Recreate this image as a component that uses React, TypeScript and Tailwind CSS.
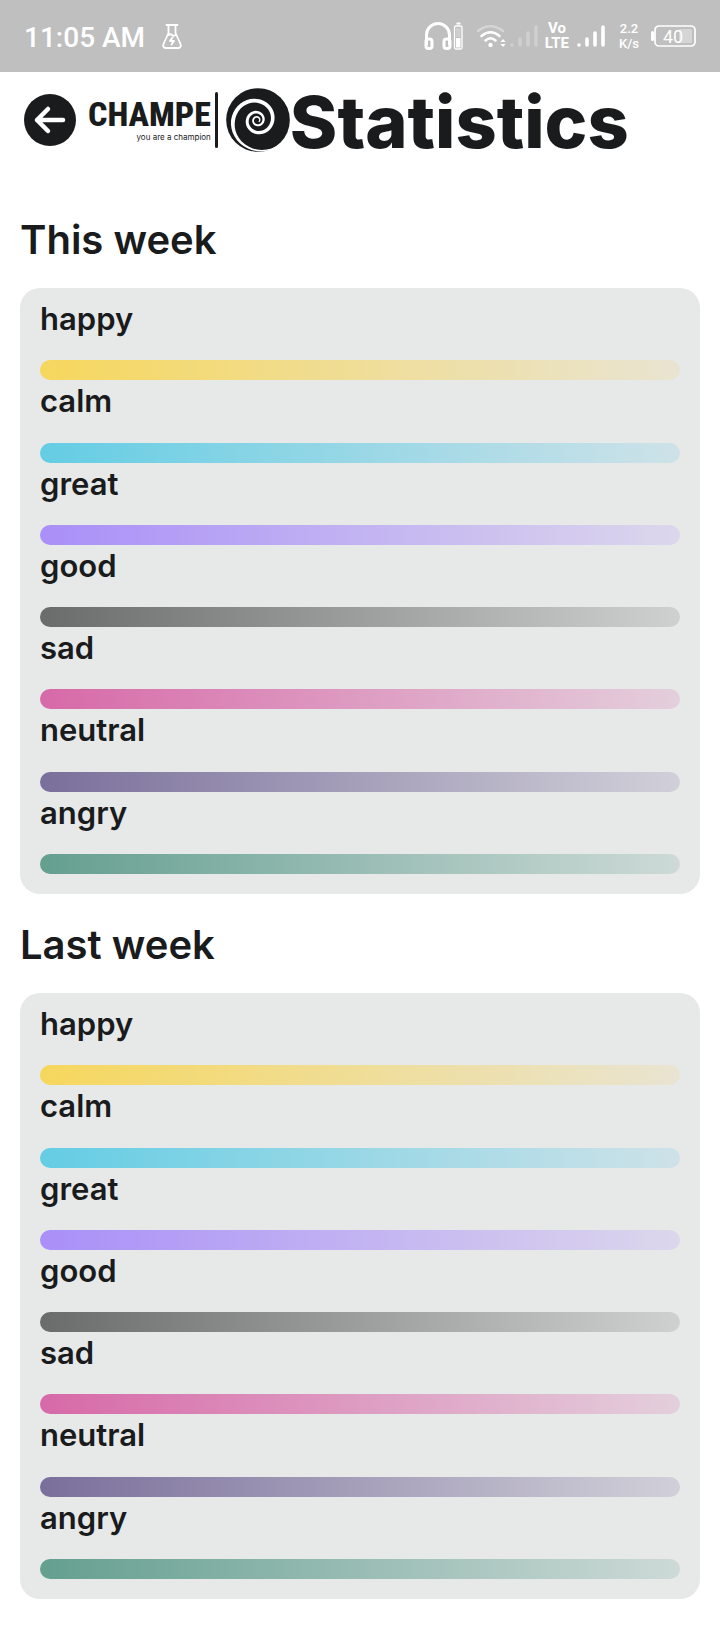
const moods = [
  { name: "happy", bar: "from-[#f6d75d] to-[#e9e4d2]" },
  { name: "calm", bar: "from-[#64cde4] to-[#cee2e8]" },
  { name: "great", bar: "from-[#a98ff8] to-[#dcd7ec]" },
  { name: "good", bar: "from-[#6a6b6b] to-[#cfd1d0]" },
  { name: "sad", bar: "from-[#d769a8] to-[#e4cfdc]" },
  { name: "neutral", bar: "from-[#7a6f9b] to-[#d1d0d9]" },
  { name: "angry", bar: "from-[#649f90] to-[#cddad7]" },
];

function FlaskIcon() {
  return (
    <svg viewBox="0 0 20 25" className="h-[25px] w-5" fill="none" stroke="white" strokeWidth="1.800" strokeLinejoin="round" strokeLinecap="round">
      <path d="M4.500 1h11M6.500 1v8L1.500 20c-.8 2 .2 4 2 4h13c1.800 0 2.800-2 2-4L13.500 9V1M6.500 11q2-1.500 3.500 0t3.500 0" />
      <path d="M10.500 13.500l-2.500 3.500h4l-2.500 3.500" />
    </svg>
  );
}

function HeadphonesIcon() {
  return (
    <svg viewBox="0 0 40 30" className="h-[30px] w-10" fill="none" stroke="white">
      <path d="M2.500 24V14a11.500 11.500 0 0 1 23 0v10" strokeWidth="3" />
      <rect x="2" y="18" width="6" height="9.500" rx="2.500" strokeWidth="3" />
      <rect x="20" y="18" width="6" height="9.500" rx="2.500" strokeWidth="3" />
      <rect x="30.500" y="5" width="7.500" height="23" rx="1.500" strokeWidth="1.300" />
      <path d="M32.500 2.500h4" strokeWidth="2" />
      <rect x="32" y="17" width="4.500" height="9.500" fill="white" stroke="none" />
      <rect x="32" y="7" width="4.500" height="9" fill="white" opacity=".25" stroke="none" />
    </svg>
  );
}

function WifiIcon() {
  return (
    <svg viewBox="0 0 30 25" className="h-[25px] w-[30px]" fill="none" stroke="white" strokeLinecap="round" strokeWidth="2.600">
      <path d="M2 7q12-9.500 25 0" opacity=".35" />
      <path d="M5.500 12q9-7.500 18 0M9.500 16.500q5-4.500 10 0" />
      <circle cx="14.500" cy="21" r="2.200" fill="white" stroke="none" />
      <path d="M27 15l2.600 3h-5.200zM27 23l2.600-3h-5.200z" fill="white" stroke="none" />
    </svg>
  );
}

function SignalIcon({ faint = false }: { faint?: boolean }) {
  return (
    <svg viewBox="0 0 28 22" className={faint ? "h-[22px] w-7 opacity-25" : "h-[22px] w-7"} stroke="white" strokeWidth="3.600" strokeLinecap="round">
      <path d="M2 20v0M10 20v-6M18 20V8M26 20V2" />
    </svg>
  );
}

function BatteryIcon() {
  return (
    <svg viewBox="0 0 45 22" className="h-[22px] w-[45px]">
      <rect x="0" y="6" width="3" height="10" rx="1.500" fill="white" />
      <rect x="28" y="4" width="13" height="14" rx="1" fill="white" opacity=".35" />
      <rect x="4" y="1" width="40" height="20" rx="4" fill="none" stroke="white" strokeWidth="1.700" />
      <text x="22" y="17.500" textAnchor="middle" fill="white" fontFamily="Roboto, sans-serif" fontSize="18">
        40
      </text>
    </svg>
  );
}

// Width of the spiral's arm at each quarter turn, from the rim to the centre.
const armWidths = [5, 12, 12, 11, 10, 9, 8, 7, 6, 5.5, 5, 4, 3];

function spiralPath() {
  const outer: string[] = [];
  const inner: string[] = [];
  for (let q = -0.4; q <= 11.5; q += 0.1) {
    const angle = ((q + 1) * Math.PI) / 2;
    const radius = 91 * Math.pow(0.8, q);
    const step = Math.max(0, Math.floor(q));
    const half = q < 0 ? 1.5 + (q + 0.4) * 2.5 : (armWidths[step] + (armWidths[step + 1] - armWidths[step]) * (q - step)) / 2;
    const point = (r: number) => `${(141 + r * Math.cos(angle)).toFixed(1)} ${(150 + r * Math.sin(angle)).toFixed(1)}`;
    outer.push(point(radius + half));
    inner.unshift(point(Math.max(1, radius - half)));
  }
  return `M${[...outer, ...inner].join("L")}Z`;
}

function Spiral() {
  return (
    <svg viewBox="47 53 193 193" className="size-16" aria-hidden="true">
      <circle cx="143.500" cy="149.500" r="96" fill="#191b1d" />
      <path d={spiralPath()} fill="white" />
    </svg>
  );
}

function WeekSection({ title }: { title: string }) {
  return (
    <section>
      <h2 className="text-[40px] leading-[60px] font-semibold">{title}</h2>
      <ul className="mt-[18px] grid min-h-[606px] auto-rows-fr rounded-[20px] bg-[#e6e9e8] px-5 pt-[10px] pb-5">
        {moods.map((mood) => (
          <li key={mood.name} className="flex flex-col justify-between">
            <span className="text-[31px] leading-[42px] font-semibold">{mood.name}</span>
            <div className={`h-5 rounded-full bg-linear-to-r/srgb ${mood.bar}`} />
          </li>
        ))}
      </ul>
    </section>
  );
}

export default function App() {
  return (
    <div className="min-h-screen bg-white font-[Inter,sans-serif] text-[#191b1d]">
      <div className="flex h-[72px] items-center bg-[#bfbfbf] px-6 font-[Roboto,sans-serif] text-white">
        <span className="mt-1 text-[28px] leading-8 font-medium">11:05 AM</span>
        <span className="ml-[17px]">
          <FlaskIcon />
        </span>
        <div className="ml-auto flex items-center">
          <HeadphonesIcon />
          <span className="ml-3">
            <WifiIcon />
          </span>
          <span className="ml-1">
            <SignalIcon faint />
          </span>
          <span className="ml-[7px] flex flex-col items-center text-[15px] leading-[15px] font-bold">
            <span>Vo</span>
            <span>LTE</span>
          </span>
          <span className="ml-2">
            <SignalIcon />
          </span>
          <span className="mr-3 ml-[14px] flex flex-col items-center text-[13px] leading-[15px] font-medium">
            <span>2.2</span>
            <span>K/s</span>
          </span>
          <BatteryIcon />
        </div>
      </div>

      <header className="flex h-24 items-center pl-6">
        <button type="button" aria-label="Back" className="size-[52px] rounded-full bg-[#191b1d]">
          <svg viewBox="0 0 52 52" className="size-[52px]" fill="none" stroke="white" strokeWidth="4.500" strokeLinecap="round" strokeLinejoin="round">
            <path d="M39 26H13M24 15L13 26l11 11" />
          </svg>
        </button>
        <div className="ml-3 flex items-center">
          <div className="flex flex-col items-end">
            <span className="font-['Roboto_Condensed','Liberation_Sans_Narrow','Liberation_Sans',sans-serif] text-[34px] leading-[34px] font-extrabold">CHAMPE</span>
            <span className="text-[8px] leading-3">you are a champion</span>
          </div>
          <span className="mr-2 ml-1 h-14 w-[3px] rounded-full bg-[#191b1d]" />
          <Spiral />
        </div>
        <h1 className="mt-1 text-[72px] leading-[84px] font-extrabold">Statistics</h1>
      </header>

      <main className="flex flex-col gap-[21px] px-5 pt-[42px] pb-10">
        <WeekSection title="This week" />
        <WeekSection title="Last week" />
      </main>
    </div>
  );
}
